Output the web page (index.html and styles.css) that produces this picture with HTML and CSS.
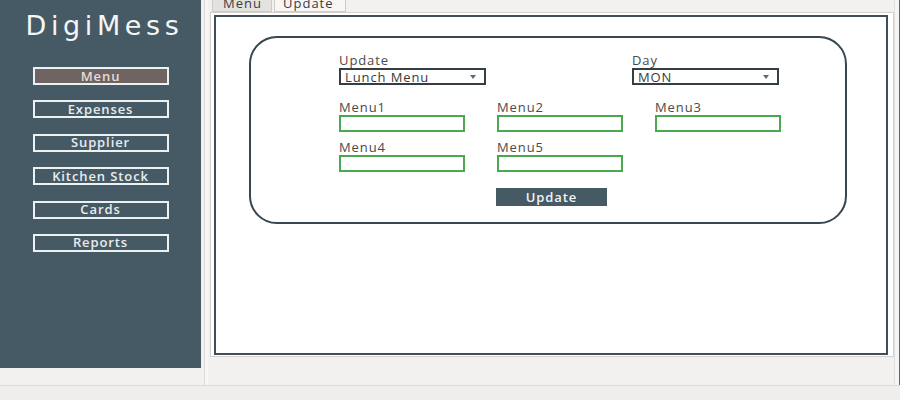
FILE: index.html
```html
<!DOCTYPE html>
<html>
<head>
<meta charset="utf-8">
<link rel="stylesheet" href="styles.css">
</head>
<body>
<div class="window">
  <div class="main">
    <aside class="sidebar">
      <h1 class="brand">DigiMess</h1>
      <nav class="nav">
        <button class="nav-btn active">Menu</button>
        <button class="nav-btn">Expenses</button>
        <button class="nav-btn">Supplier</button>
        <button class="nav-btn">Kitchen Stock</button>
        <button class="nav-btn">Cards</button>
        <button class="nav-btn">Reports</button>
      </nav>
    </aside>
    <div class="gutter"></div>
    <section class="notebook">
      <div class="tabs">
        <div class="tab">Menu</div>
        <div class="tab selected">Update</div>
      </div>
      <div class="page">
        <div class="box">
          <div class="card">
            <div class="row top-row">
              <div class="field">
                <label class="lbl">Update</label>
                <div class="select"><span>Lunch Menu</span><span class="arrow"></span></div>
              </div>
              <div class="field">
                <label class="lbl">Day</label>
                <div class="select"><span>MON</span><span class="arrow"></span></div>
              </div>
            </div>
            <div class="grid">
              <div class="field"><label class="lbl">Menu1</label><div class="input"></div></div>
              <div class="field"><label class="lbl">Menu2</label><div class="input"></div></div>
              <div class="field"><label class="lbl">Menu3</label><div class="input"></div></div>
              <div class="field"><label class="lbl">Menu4</label><div class="input"></div></div>
              <div class="field"><label class="lbl">Menu5</label><div class="input"></div></div>
            </div>
            <div class="actions"><button class="update-btn">Update</button></div>
          </div>
        </div>
      </div>
    </section>
    <div class="edge"></div>
  </div>
  <div class="status"></div>
</div>
</body>
</html>
```

FILE: styles.css
```css
* { box-sizing: border-box; }
html, body { margin: 0; padding: 0; }
body {
  width: 900px;
  height: 400px;
  overflow: hidden;
  background: #f2f1f0;
  font-family: "Open Sans", "DejaVu Sans", sans-serif;
}
.window { display: flex; flex-direction: column; height: 400px; }
.main { display: flex; height: 385px; }
.sidebar {
  width: 201px;
  height: 368px;
  background: #465a66;
  display: flex;
  flex-direction: column;
  align-items: center;
}
.brand {
  margin: 10px 0 0 8px;
  color: #f4f6f6;
  font-family: "DejaVu Sans", sans-serif;
  font-weight: 400;
  font-size: 27px;
  letter-spacing: 4.6px;
  line-height: 32px;
  white-space: nowrap;
}
.nav { display: flex; flex-direction: column; gap: 15.4px; margin-top: 25px; }
.nav-btn {
  width: 136px;
  height: 18px;
  border: 2px solid #eef1f2;
  background: #465a66;
  color: #e8ecee;
  font-family: inherit;
  font-size: 13px;
  font-weight: 600;
  letter-spacing: 0.9px;
  padding: 0;
  line-height: 13px;
}
.nav-btn.active { background: #6e6562; color: #e7dcd6; }
.gutter {
  width: 9px;
  border-left: 3px solid #f2f1f0;
  background: linear-gradient(to right, #dcdad6 0, #dcdad6 1px, #f7f6f5 1px, #f7f6f5 4px, #f2f1f0 4px);
}
.notebook { width: 684px; display: flex; flex-direction: column; }
.tabs { display: flex; height: 12px; gap: 2px; margin-left: 2px; }
.tab {
  height: 12px;
  padding: 0 0 0 10px;
  background: #e4e2de;
  border: 1px solid #cfccc7;
  border-top: none;
  font-size: 13px;
  letter-spacing: 1px;
  color: #3c3c3c;
  line-height: 7px;
  overflow: hidden;
  width: 60px;
}
.tab.selected { background: #f8f7f6; width: 72px; padding-left: 8px; }
.page {
  height: 345px;
  background: #fff;
  border: 1px solid #d4d1cc;
  padding: 2px 5px 1px 3px;
}
.box {
  height: 340px;
  border: 2px solid #3e4f58;
  padding: 19px 39px 0 33px;
  background: #fff;
}
.card {
  height: 188px;
  border: 2px solid #37474f;
  border-radius: 28px;
  padding: 14px 0 0 88px;
}
.row { display: flex; }
.top-row { gap: 146px; }
.field { display: flex; flex-direction: column; }
.lbl {
  font-size: 13px;
  color: #4a4a4a;
  line-height: 16px;
  height: 16px;
  letter-spacing: 0.9px;
}
.select {
  width: 147px;
  height: 17px;
  border: 2px solid #333f45;
  display: flex;
  align-items: center;
  justify-content: space-between;
  padding: 0 8px 0 4px;
  font-size: 13px;
  color: #3a3a3a;
  letter-spacing: 0.9px;
}
.arrow {
  width: 0; height: 0;
  border-left: 3px solid transparent;
  border-right: 3px solid transparent;
  border-top: 4px solid #666;
}
.grid {
  display: grid;
  grid-template-columns: repeat(3, 126px);
  column-gap: 32px;
  row-gap: 7px;
  margin-top: 14px;
}
.input {
  width: 126px;
  height: 17px;
  border: 2px solid #4aa84e;
}
.actions { margin: 13px 0 0 157px; }
.update-btn {
  width: 111px;
  height: 18px;
  border: none;
  background: #455a64;
  color: #f2f4f5;
  font-family: inherit;
  font-size: 13px;
  font-weight: 600;
  letter-spacing: 0.9px;
  padding: 0;
}
.edge {
  width: 6px;
  border-left: 1px solid #e2e0dc;
  border-right: 1px solid #59636a;
  background: #f5f4f3;
}
.status {
  flex: 1;
  border-top: 1px solid #dcdad6;
  background: #efeeec;
}
```
